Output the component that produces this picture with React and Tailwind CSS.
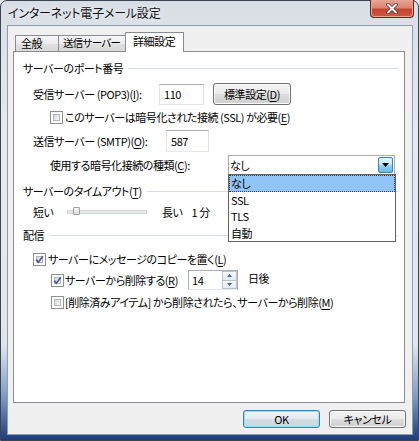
import React from "react";

/* ============ small helpers ============ */

const Key = ({ children }) => <span className="underline underline-offset-2">{children}</span>;

const Checkbox = ({ checked }) => (
  <span className="relative flex h-[13px] w-[13px] shrink-0 items-center justify-center border border-[#8e8f8f] bg-white">
    <span className="absolute inset-[2px] border border-[#b3b8bd] bg-[linear-gradient(135deg,#d3d7dc,#f7f7f7)]" />
    {checked && (
      <svg className="relative" width="9" height="9" viewBox="0 0 9 9">
        <path d="M1.2 4.6 L3.4 7.2 L7.9 1.2" fill="none" stroke="#4b5f8f" strokeWidth="1.7" />
      </svg>
    )}
  </span>
);

const Group = ({ children }) => (
  <div className="flex h-[18px] items-center pr-[6px]">
    <span className="shrink-0 whitespace-nowrap">{children}</span>
    <span className="ml-[5px] h-px flex-1 bg-[#d5dfe5]" />
  </div>
);

const WinButton = ({ children, isDefault }) => (
  <div
    className={
      isDefault
        ? "flex h-[18px] w-[77px] items-center justify-center rounded-[3px] border border-[#3c7fb1] bg-[linear-gradient(to_bottom,#eef3f7,#e4eaef_50%,#d5dde4_50%,#cbd5de)] shadow-[inset_0_0_0_1px_#8ee2f9]"
        : "flex h-[18px] w-[77px] items-center justify-center rounded-[3px] border border-[#707070] bg-[linear-gradient(to_bottom,#f2f2f2,#ebebeb_50%,#dddddd_50%,#cfcfcf)] shadow-[inset_0_0_0_1px_#fbfbfb]"
    }
  >
    {children}
  </div>
);

/* ============ dialog ============ */

export default function App() {
  return (
    <div className="h-[441px] w-[419px] bg-[#e3e7ec] font-['Noto_Sans_CJK_JP',sans-serif] text-[11px] leading-none tracking-[-0.45px] text-black [font-feature-settings:'palt']">
      <div className="flex h-[441px] w-[419px] flex-col rounded-t-[7px] border border-[#3b4452] bg-[linear-gradient(to_bottom,#d8dee5_0%,#e6eaef_30%,#e3e7ec_78%,#7f9cc6_90%,#1f3b7a_100%)]">
        {/* TITLE BAR */}
        <div className="flex h-[24px] shrink-0 items-start justify-between">
          <span className="ml-[7px] mt-[6px] text-[12px] tracking-[-0.2px] text-[#111] [text-shadow:0_0_6px_#ffffff]">
            インターネット電子メール設定
          </span>
          <div className="-mt-px mr-[4px] flex h-[18px] w-[44px] items-center justify-center rounded-b-[4px] border border-t-0 border-[#6b2219] bg-[linear-gradient(to_bottom,#e8a593,#d98670_45%,#c8452f_55%,#cc5a41)] shadow-[inset_0_0_0_1px_#e9a491]">
            <svg width="12" height="11" viewBox="0 0 12 11">
              <path d="M2 1.5 L10 9.5 M10 1.5 L2 9.5" stroke="#5a2a22" strokeWidth="3.6" strokeLinecap="round" />
              <path d="M2 1.5 L10 9.5 M10 1.5 L2 9.5" stroke="#ffffff" strokeWidth="2" strokeLinecap="round" />
            </svg>
          </div>
        </div>

        {/* CLIENT AREA */}
        <div className="mb-[5px] ml-[6px] mr-[5px] flex flex-1 flex-col border border-[#8f9cae] bg-[#f0f0f0]">
          {/* TABS */}
          <div className="ml-[7px] mt-[6px] flex h-[20px] items-end">
            <div className="mb-px flex h-[16px] w-[44px] items-center border border-b-0 border-[#898c95] bg-[linear-gradient(to_bottom,#f6f6f6,#ececec_50%,#e0e0e0_51%,#d8d8d8)] pl-[5px]">
              全般
            </div>
            <div className="-ml-px mb-px flex h-[16px] w-[68px] items-center whitespace-nowrap border border-b-0 border-[#898c95] bg-[linear-gradient(to_bottom,#f6f6f6,#ececec_50%,#e0e0e0_51%,#d8d8d8)] pl-[4px] text-[10.5px] tracking-[-0.7px]">
              送信サーバー
            </div>
            <div className="relative z-10 -ml-px flex h-[20px] w-[59px] items-center border border-b-0 border-[#898c95] bg-white pb-[2px] pl-[7px]">
              詳細設定
            </div>
          </div>

          {/* PANEL */}
          <div className="-mt-px ml-[5px] flex h-[352px] w-[392px] flex-col border border-[#898c95] bg-white pl-[9px]">
            <div className="mt-[7px]">
              <Group>サーバーのポート番号</Group>
            </div>

            <div className="ml-[10px] mt-[6px] flex h-[22px] items-center">
              <span className="w-[126px]">
                受信サーバー (POP3)(<Key>I</Key>):
              </span>
              <div className="flex h-[21px] w-[45px] items-center border border-[#abadb3] border-b-[#e3e9ef] border-l-[#e2e3ea] border-r-[#dbdfe6] bg-white pl-[4px]">
                110
              </div>
              <div className="ml-[9px] flex h-[22px] w-[78px] items-center justify-center rounded-[3px] border border-[#707070] bg-[linear-gradient(to_bottom,#f2f2f2,#ebebeb_50%,#dddddd_50%,#cfcfcf)] shadow-[inset_0_0_0_1px_#fbfbfb]">
                標準設定(<Key>D</Key>)
              </div>
            </div>

            <div className="ml-[27px] mt-[4px] flex h-[16px] items-center">
              <Checkbox />
              <span className="ml-[2px]">
                このサーバーは暗号化された接続 (SSL) が必要(<Key>E</Key>)
              </span>
            </div>

            <div className="ml-[10px] mt-[5px] flex h-[22px] items-center">
              <span className="w-[133px]">
                送信サーバー (SMTP)(<Key>O</Key>):
              </span>
              <div className="flex h-[22px] w-[43px] items-center border border-[#abadb3] border-b-[#e3e9ef] border-l-[#e2e3ea] border-r-[#dbdfe6] bg-white pl-[4px]">
                587
              </div>
            </div>

            <div className="ml-[27px] mt-[3px] flex h-[20px] items-center">
              <span className="w-[178px]">
                使用する暗号化接続の種類(<Key>C</Key>):
              </span>
              <div className="relative h-[20px] w-[167px] border border-[#abadb3] bg-white">
                <div className="flex h-full items-center pl-[1px]">なし</div>
                <div className="absolute bottom-px right-px top-px flex w-[15px] items-center justify-center rounded-[2px] border border-[#3c7fb1] bg-[linear-gradient(to_bottom,#e5f4fc,#c4e5f6_50%,#98d1ef_50%,#6cbbe6)]">
                  <svg width="7" height="4" viewBox="0 0 7 4">
                    <path d="M0 0 H7 L3.5 4 Z" fill="#000" />
                  </svg>
                </div>
                {/* open dropdown list */}
                <div className="absolute -left-px top-full z-20 w-[168px] border border-[#646464] bg-white">
                  <div className="flex h-[17px] items-center border border-dotted border-[#3d3d3d] bg-[#91c4f7] pl-[1px]">
                    なし
                  </div>
                  <div className="flex h-[16px] items-center pl-[2px]">SSL</div>
                  <div className="flex h-[17px] items-center pl-[2px]">TLS</div>
                  <div className="flex h-[16px] items-center pl-[2px]">自動</div>
                </div>
              </div>
            </div>

            <div className="mt-[7px]">
              <Group>
                サーバーのタイムアウト(<Key>T</Key>)
              </Group>
            </div>

            <div className="ml-[10px] mt-[4px] flex h-[16px] items-center">
              <span className="w-[34px]">短い</span>
              <div className="relative flex h-[16px] w-[80px] items-center">
                <div className="h-[4px] w-full border border-[#d6d6d6] bg-[#e7eaea]" />
                <div className="absolute left-[6px] top-[3px] h-[8px] w-[7px] rounded-[1px] border border-[#a0a0a0] bg-[linear-gradient(to_bottom,#f4f4f4,#dcdcdc)]" />
              </div>
              <span className="ml-[15px]">長い</span>
              <span className="ml-[9px]">1 分</span>
            </div>

            <div className="mt-[6px]">
              <Group>配信</Group>
            </div>

            <div className="ml-[10px] mt-[7px] flex h-[16px] items-center">
              <Checkbox checked />
              <span className="ml-[2px]">
                サーバーにメッセージのコピーを置く(<Key>L</Key>)
              </span>
            </div>

            <div className="ml-[28px] mt-[3px] flex h-[20px] items-center">
              <Checkbox checked />
              <span className="ml-[1px] w-[123px]">
                サーバーから削除する(<Key>R</Key>)
              </span>
              <div className="flex h-[20px] w-[50px] border border-[#abadb3] border-b-[#e3e9ef] bg-white">
                <span className="flex flex-1 items-center pl-[3px]">14</span>
                <div className="flex w-[15px] flex-col">
                  <div className="flex flex-1 items-center justify-center border border-[#b8c3d1] bg-[linear-gradient(to_bottom,#f7f9fb,#e4eaf1)]">
                    <svg width="5" height="3" viewBox="0 0 5 3">
                      <path d="M0 3 H5 L2.5 0 Z" fill="#46628f" />
                    </svg>
                  </div>
                  <div className="flex flex-1 items-center justify-center border border-t-0 border-[#b8c3d1] bg-[linear-gradient(to_bottom,#f7f9fb,#e4eaf1)]">
                    <svg width="5" height="3" viewBox="0 0 5 3">
                      <path d="M0 0 H5 L2.5 3 Z" fill="#46628f" />
                    </svg>
                  </div>
                </div>
              </div>
              <span className="-mt-[4px] ml-[10px]">日後</span>
            </div>

            <div className="ml-[28px] mt-[4px] flex h-[16px] items-center">
              <Checkbox />
              <span className="ml-[1px]">
                [削除済みアイテム] から削除されたら、サーバーから削除(<Key>M</Key>)
              </span>
            </div>
          </div>

          {/* BUTTONS */}
          <div className="mr-[6px] mt-[7px] flex justify-end gap-[9px]">
            <WinButton isDefault>OK</WinButton>
            <WinButton>キャンセル</WinButton>
          </div>
        </div>
      </div>
    </div>
  );
}
